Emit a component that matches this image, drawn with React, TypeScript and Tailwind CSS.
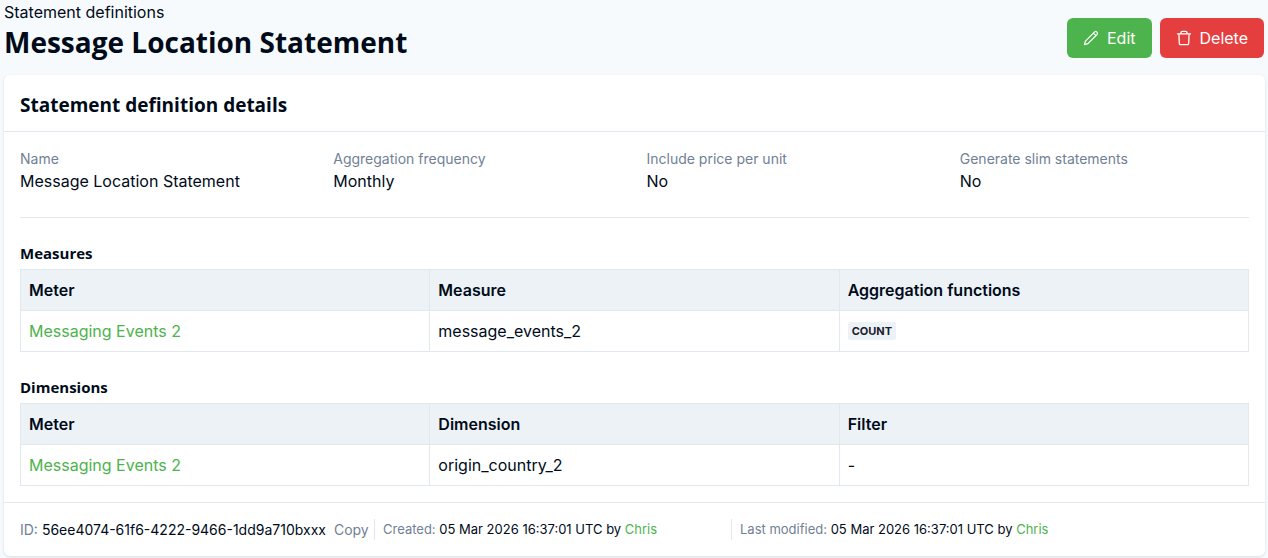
import type { ReactNode } from "react"

const details = [
  { label: "Name", value: "Message Location Statement" },
  { label: "Aggregation frequency", value: "Monthly" },
  { label: "Include price per unit", value: "No" },
  { label: "Generate slim statements", value: "No" },
]

function PencilIcon() {
  return (
    <svg className="size-4" viewBox="0 0 24 24" fill="none" stroke="currentColor" strokeWidth="1.8" strokeLinecap="round" strokeLinejoin="round" aria-hidden="true">
      <path d="M15.6 4.6l1.7-1.7a2.7 2.7 0 0 1 3.8 3.8L7.4 20.4 2 22l1.6-5.4L15.6 4.6zm0 0l3.8 3.8" />
    </svg>
  )
}

function TrashIcon() {
  return (
    <svg className="size-4" viewBox="0 0 16 16" fill="none" stroke="currentColor" strokeWidth="1.3" strokeLinecap="round" strokeLinejoin="round" aria-hidden="true">
      <path d="M1.5 3.8h13M5 3.8V2.5a1.2 1.2 0 0 1 1.2-1.2h3.6A1.2 1.2 0 0 1 11 2.5v1.3M2.9 3.8l.4 9.5a1.3 1.3 0 0 0 1.3 1.3h6.8a1.3 1.3 0 0 0 1.3-1.3l.4-9.5" />
    </svg>
  )
}

function DataTable({ title, columns, row }: { title: string; columns: string[]; row: ReactNode[] }) {
  return (
    <section>
      <h3 className="mb-1 font-['Open_Sans','Noto_Sans',sans-serif] text-[15px] leading-6 font-bold">{title}</h3>
      <table className="w-full table-fixed border-collapse border border-[#e2e8f0] text-left">
        <thead className="bg-[#edf2f7]">
          <tr>
            {columns.map((column) => (
              <th key={column} scope="col" className="border border-[#e2e8f0] p-2 font-semibold">
                {column}
              </th>
            ))}
          </tr>
        </thead>
        <tbody>
          <tr>
            {row.map((cell, i) => (
              <td key={columns[i]} className="border border-[#e2e8f0] p-2">
                {cell}
              </td>
            ))}
          </tr>
        </tbody>
      </table>
    </section>
  )
}

function GreenLink({ children }: { children: ReactNode }) {
  return (
    <a href="#" className="text-[#4db34d] hover:underline">
      {children}
    </a>
  )
}

export default function App() {
  return (
    <div className="min-h-screen bg-[#f7fafc] pr-[3px] pl-1 font-[Inter,sans-serif] text-base text-[#000b1a]">
      <header className="flex items-end justify-between">
        <div>
          <a href="#" className="block leading-6">Statement definitions</a>
          <h1 className="font-['Open_Sans','Noto_Sans',sans-serif] text-[28px] leading-9 font-bold">
            Message Location Statement
          </h1>
        </div>
        <div className="mr-px mb-[2px] flex gap-2">
          <button type="button" className="flex h-10 items-center gap-2 rounded-md bg-[#4db34d] px-4 text-white">
            <PencilIcon />
            Edit
          </button>
          <button type="button" className="flex h-10 items-center gap-2 rounded-md bg-[#e53e3e] px-4 text-white">
            <TrashIcon />
            Delete
          </button>
        </div>
      </header>

      <main className="mt-[15px] rounded-md bg-white shadow-[0_1px_3px_rgba(0,0,0,0.12)]">
        <div className="border-b border-[#e2e8f0] px-4 pt-[18px] pb-[14px]">
          <h2 className="font-['Open_Sans','Noto_Sans',sans-serif] text-[19px] leading-6 font-bold">
            Statement definition details
          </h2>
        </div>

        <div className="p-4">
          <dl className="grid grid-cols-4 gap-6 border-b border-[#e2e8f0] pb-6">
            {details.map(({ label, value }) => (
              <div key={label}>
                <dt className="text-sm leading-[22px] text-[#718096]">{label}</dt>
                <dd className="leading-[23px]">{value}</dd>
              </div>
            ))}
          </dl>

          <div className="mt-[23px] space-y-[23px]">
            <DataTable
              title="Measures"
              columns={["Meter", "Measure", "Aggregation functions"]}
              row={[
                <GreenLink>Messaging Events 2</GreenLink>,
                "message_events_2",
                <span className="block w-fit rounded-xs bg-[#edf2f7] px-1 text-[11px] leading-[18px] font-bold text-[#1a202c]">COUNT</span>,
              ]}
            />
            <DataTable
              title="Dimensions"
              columns={["Meter", "Dimension", "Filter"]}
              row={[<GreenLink>Messaging Events 2</GreenLink>, "origin_country_2", "-"]}
            />
          </div>
        </div>

        <footer className="flex items-center border-t border-[#e2e8f0] p-4 text-[13px] leading-[21px] whitespace-nowrap">
          <div className="flex w-[354px] gap-1 text-sm leading-[21px]">
            <span className="text-[#718096]">ID:</span>
            <span>56ee4074-61f6-4222-9466-1dd9a710bxxx</span>
            <button type="button" className="ml-1 text-[#718096]">Copy</button>
          </div>
          <div className="w-[357px] border-l border-[#e2e8f0] pl-2">
            <span className="text-[#718096]">Created:</span> 05 Mar 2026 16:37:01 UTC by <GreenLink>Chris</GreenLink>
          </div>
          <div className="border-l border-[#e2e8f0] pl-2">
            <span className="text-[#718096]">Last modified:</span> 05 Mar 2026 16:37:01 UTC by <GreenLink>Chris</GreenLink>
          </div>
        </footer>
      </main>
    </div>
  )
}
